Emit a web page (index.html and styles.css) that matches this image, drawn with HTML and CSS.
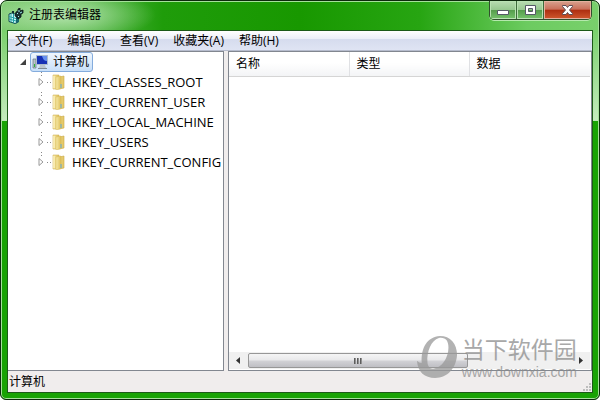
FILE: index.html
```
<!DOCTYPE html>
<html lang="zh-CN">
<head>
<meta charset="utf-8">
<title>注册表编辑器</title>
<link rel="stylesheet" href="styles.css">
</head>
<body>
<svg class="defs" aria-hidden="true">
  <defs>
    <linearGradient id="gold" x1="0" x2="1"><stop offset="0" stop-color="#f8eba8"/><stop offset="1" stop-color="#dcbc55"/></linearGradient>
    <symbol id="folder" viewBox="0 0 16 16">
      <path d="M2 1h6v14H2z" fill="url(#gold)" stroke="#d3b65a" stroke-width=".6"/>
      <path d="M8 3l5-1v12l-5 1z" fill="#e5ca6c" stroke="#c9a947" stroke-width=".6"/>
      <path d="M5 3l5-1v12.500l-5 1.500z" fill="url(#gold)" stroke="#d7ba5d" stroke-width=".5"/>
      <path d="M9 10h2v4H9z" fill="#9fb6a0"/>
      <path d="M3 2v12" stroke="#fff7cf"/>
    </symbol>
    <symbol id="closed" viewBox="0 0 8 10"><path d="M2 1.500v7L6 5z" fill="#fff" stroke="#999"/></symbol>
  </defs>
</svg>
<div class="window">
  <header class="titlebar">
    <svg class="app-icon" viewBox="0 0 16 16" aria-hidden="true">
      <path d="M1 6l3-1 6 2v7l-3 1.500-6-2z" fill="#c9f7f5" stroke="#0d4a50"/>
      <path d="M8 8l3-1v7l-3 1.500z" fill="#16666c"/>
      <path d="M1 8.500l7 2M1 11l7 2M3 6v8M5.500 6v9" fill="none" stroke="#23a0a6"/>
      <path d="M8 4l2-1V1l2-1v3l3-1v3l-2 1v3l-3 2-1-2-2-1z" fill="#1b3234" stroke="#071314" stroke-width=".8"/>
      <path d="M9 5l1 1M11 2v2M12 5l2-1M10 8l1 1" stroke="#9ff0ee"/>
      <path d="M4 3h2v2H4z" fill="#102c2e"/>
    </svg>
    <h1>注册表编辑器</h1>
    <div class="controls">
      <button class="control" aria-label="最小化"><svg viewBox="0 0 13 11"><path d="M.5 5.500h11v4H.5z" fill="#fff" stroke="#555a66"/></svg></button>
      <button class="control" aria-label="最大化"><svg viewBox="0 0 13 11"><path fill-rule="evenodd" d="M1.500.5h10v9h-10zM4.500 3.500v3h4v-3z" fill="#fff" stroke="#555a66"/></svg></button>
      <button class="control close" aria-label="关闭"><svg viewBox="0 0 13 11"><path d="M1.500.5h3.500l1.500 2 1.500-2h3.500v1L8.500 5l3 3.500v1H8l-1.500-2-1.500 2H1.500v-1L4.500 5l-3-3.500z" fill="#fff" stroke="#5d4d55"/></svg></button>
    </div>
  </header>
  <div class="client">
    <nav class="menu">
      <button>文件(F)</button><button>编辑(E)</button><button>查看(V)</button><button>收藏夹(A)</button><button>帮助(H)</button>
    </nav>
    <main class="panes">
      <section class="pane tree">
        <div class="root">
          <svg class="open" viewBox="0 0 8 8" aria-hidden="true"><path d="M7 1v6H1z" fill="#404040"/></svg>
          <button class="selected">
            <svg class="computer" viewBox="0 0 18 16" aria-hidden="true">
              <path d="M1 5h3v9H1z" fill="#b9c3c9" stroke="#69777e" stroke-width=".7"/>
              <path d="M2 10h1v3H2z" fill="#2cb83c"/>
              <path d="M4.500 1.500h11v9h-11z" fill="#1731b5" stroke="#aebdcc"/>
              <path d="M10 2h5v5c-3 0-4-2-5-5z" fill="#6690ef"/>
              <path d="M8 11h5l1 3H7z" fill="#bcc6ce"/><path d="M6 14.500h9" stroke="#7e8b95"/>
            </svg>
            计算机
          </button>
        </div>
        <ul>
          <li><svg class="arrow"><use href="#closed"/></svg><svg class="folder"><use href="#folder"/></svg>HKEY_CLASSES_ROOT</li>
          <li><svg class="arrow"><use href="#closed"/></svg><svg class="folder"><use href="#folder"/></svg>HKEY_CURRENT_USER</li>
          <li><svg class="arrow"><use href="#closed"/></svg><svg class="folder"><use href="#folder"/></svg>HKEY_LOCAL_MACHINE</li>
          <li><svg class="arrow"><use href="#closed"/></svg><svg class="folder"><use href="#folder"/></svg>HKEY_USERS</li>
          <li><svg class="arrow"><use href="#closed"/></svg><svg class="folder"><use href="#folder"/></svg>HKEY_CURRENT_CONFIG</li>
        </ul>
      </section>
      <section class="pane list">
        <table>
          <thead><tr><th>名称</th><th>类型</th><th>数据</th></tr></thead>
        </table>
        <div class="scrollbar">
          <button aria-label="向左滚动"><svg viewBox="0 0 4 7"><path d="M4 0v7L0 3.500z" fill="#333"/></svg></button>
          <div class="track"><div class="thumb"><i></i><i></i><i></i></div></div>
          <button aria-label="向右滚动"><svg viewBox="0 0 4 7"><path d="M0 0v7l4-3.500z" fill="#333"/></svg></button>
        </div>
      </section>
    </main>
    <footer class="status">
      <span>计算机</span>
      <svg class="grip" viewBox="0 0 10 10" aria-hidden="true"><path d="M7 1h2v2H7zM4 4h2v2H4zM7 4h2v2H7zM1 7h2v2H1zM4 7h2v2H4zM7 7h2v2H7z" fill="#bdbdbd"/></svg>
    </footer>
  </div>
  <div class="watermark">
    <svg viewBox="0 0 44 46" aria-hidden="true"><path fill-rule="evenodd" d="M25 1C36 1 43 9 43 21C42 35 33 45 20 45C9 45 2 39 1 27C3 29 4 29 6 29C5 13 12 2 25 1zM24 3C16 5 11 18 12 28C12 33 15 36 19 35C27 34 34 24 34 13C34 6 31 2 24 3z"/></svg>
    <div><strong>当下软件园</strong><span>www.downxia.com</span></div>
  </div>
</div>
</body>
</html>
```
FILE: styles.css
```
* { box-sizing: border-box; }
body {
  margin: 0;
  background: #fff;
  color: #000;
  font: 12px/20px "Open Sans", "Noto Sans CJK SC", sans-serif;
}
button { margin: 0; padding: 0; border: 0; background: none; color: inherit; font: inherit; }
.defs { position: absolute; width: 0; height: 0; }
.window {
  position: relative;
  display: flex;
  flex-direction: column;
  height: 100vh;
  padding: 0 6px 6px;
  border: 1px solid #0c2a0c;
  border-radius: 7px 7px 6px 6px;
  background:
    radial-gradient(ellipse 90px 26px at 65px 14px, rgba(205, 240, 200, .7) 10%, rgba(205, 240, 200, 0)) 0 0 / 100% 29px no-repeat,
    linear-gradient(90deg, #79c86c 0, #4fb341 16%, #1f9c0a 27%, #189800 50%, #27a512 70%, #6ccb60 88%, #79d06c) 0 0 / 100% 29px no-repeat,
    linear-gradient(#79d06c, #c4ebbd 99%, #b6e6ae) 0 29px / 100% 91px no-repeat,
    #18a304;
  box-shadow: inset 0 0 0 1px #a5e09b;
}
.titlebar { display: flex; flex: 0 0 29px; align-items: flex-start; padding: 0 1px; }
.app-icon { width: 16px; height: 16px; margin-top: 7px; }
h1 { margin: 4px 0 0 5px; font: inherit; }
.controls {
  display: flex;
  margin-left: auto;
  border: 1px solid #31502e;
  border-top: 0;
  border-radius: 0 0 5px 5px;
  overflow: hidden;
  box-shadow: 0 1px 0 #b5e9ad;
}
.control {
  display: grid;
  place-items: center;
  width: 27px;
  height: 18px;
  border-right: 1px solid #3e6a3b;
  background: linear-gradient(#b8dcb2, #97c890 48%, #559b4c 50%, #76c36c);
  box-shadow: inset 0 0 0 1px #b9e2b3;
}
.control svg { width: 13px; height: 11px; }
.close {
  width: 47px;
  border: 0;
  background: linear-gradient(#d8a28f, #c9705a 46%, #ad2e10 50%, #d0582e);
  box-shadow: inset 0 0 0 1px #e3b19e;
}
.client {
  display: flex;
  flex: 1;
  flex-direction: column;
  min-height: 0;
  border: 1px solid #1c5a18;
  background: #f0eded;
}
.menu {
  display: flex;
  flex: 0 0 20px;
  gap: 15px;
  padding-left: 7px;
  border-bottom: 1px solid #b6bccd;
  background: linear-gradient(#fff, #eceff8 40%, #d6dcee 45%, #dfe4f3);
  line-height: 18px;
}
.panes { display: flex; flex: 1; gap: 4px; min-height: 0; }
.pane { border: 1px solid #828790; background: #fff; }
.tree { flex: 0 0 37%; border-left: 0; }
.root { display: flex; align-items: center; height: 20px; padding-left: 11px; }
.open { width: 8px; height: 8px; margin-right: 3px; }
.selected {
  display: flex;
  align-items: center;
  height: 20px;
  padding: 0 3px 0 1px;
  gap: 3px;
  border: 1px solid #84acdd;
  border-radius: 3px;
  background: linear-gradient(#eff6fe, #c8dff8);
}
.computer { width: 18px; height: 16px; }
ul { margin: 0; padding: 0 0 0 29px; list-style: none; }
li {
  display: flex;
  align-items: center;
  height: 20px;
  font-size: 13px;
  background:
    repeating-linear-gradient(90deg, #888 0 1px, transparent 1px 3px) 10px 10px / 5px 1px no-repeat,
    repeating-linear-gradient(#888 0 1px, transparent 1px 3px) 4px 0 / 1px 4px no-repeat;
}
.arrow { width: 8px; height: 10px; }
.folder { width: 16px; height: 16px; margin: 0 5px 0 6px; }
.list { display: flex; flex: 1; flex-direction: column; min-width: 0; padding: 0 1px 1px 0; }
table { width: 100%; border-collapse: collapse; table-layout: fixed; }
th {
  width: 120px;
  height: 24px;
  padding: 0 0 0 7px;
  border-right: 1px solid #e0e1e4;
  border-bottom: 1px solid #d5d5d5;
  background: linear-gradient(#fff 45%, #f3f4f6);
  font-weight: 400;
  text-align: left;
}
th:last-child { width: auto; border-right: 0; }
.scrollbar { display: flex; height: 17px; margin-top: auto; background: #f0f0f0; }
.scrollbar button { display: grid; place-items: center; width: 18px; }
.scrollbar svg { width: 4px; height: 7px; }
.track { flex: 1; padding: 1px; }
.thumb {
  display: flex;
  justify-content: center;
  align-items: center;
  gap: 1px;
  width: 68%;
  height: 15px;
  border: 1px solid #979797;
  border-radius: 2px;
  background: linear-gradient(#f5f5f5, #e8e8ea 48%, #d2d2d6 52%, #bfbfc4);
}
.thumb i { width: 2px; height: 6px; background: linear-gradient(90deg, #444, #aaa); }
.status { display: flex; flex: 0 0 21px; justify-content: space-between; align-items: flex-end; padding-left: 1px; }
.grip { width: 10px; height: 10px; }
.watermark {
  position: absolute;
  right: 22px;
  bottom: 17px;
  display: flex;
  gap: 4px;
  color: #8c8c8c;
  opacity: .75;
  pointer-events: none;
}
.watermark svg { width: 42px; height: 46px; fill: #999; }
.watermark div { display: flex; flex-direction: column; }
.watermark strong { font: 400 23px/28px "Noto Sans CJK SC", sans-serif; }
.watermark span { font: 14px/20px "Liberation Sans", sans-serif; }
```
